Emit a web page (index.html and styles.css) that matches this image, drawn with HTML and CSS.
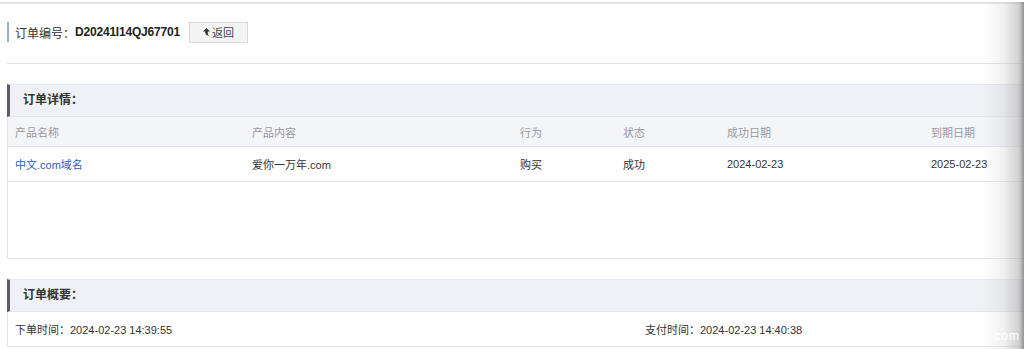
FILE: index.html
```html
<!DOCTYPE html>
<html lang="zh">
<head>
<meta charset="utf-8">
<link rel="stylesheet" href="styles.css">
</head>
<body>
<div class="page">
  <div class="order-head">
    <span class="label">订单编号：</span><span class="order-no">D20241I14QJ67701</span>
    <button class="back-btn"><svg class="back-ico" width="7" height="8" viewBox="0 0 7 8"><path d="M3.5 0 L7 3.4 H4.8 V5.2 C4.8 6.6 5.6 7.4 6.6 8 C4 7.8 2.2 6.6 2.2 4.6 V3.4 H0 Z" fill="#333"/></svg>返回</button>
  </div>
  <div class="divider"></div>

  <div class="section detail">
    <div class="sec-title">订单详情：</div>
    <div class="grid thead">
      <span>产品名称</span><span>产品内容</span><span>行为</span><span>状态</span><span>成功日期</span><span>到期日期</span>
    </div>
    <div class="grid trow">
      <a class="link">中文.com域名</a><span>爱你一万年.com</span><span>购买</span><span>成功</span><span>2024-02-23</span><span>2025-02-23</span>
    </div>
    <div class="empty"></div>
  </div>

  <div class="section summary">
    <div class="sec-title">订单概要：</div>
    <div class="sum-row">
      <span class="sum-left">下单时间：2024-02-23 14:39:55</span>
      <span class="sum-right">支付时间：2024-02-23 14:40:38</span>
    </div>
  </div>
</div>
<div class="edge-shadow"></div>
<div class="watermark">.com</div>
</body>
</html>
```

FILE: styles.css
```css
html, body {
  margin: 0;
  padding: 0;
  background: #fff;
  overflow: hidden;
  width: 1024px;
  height: 349px;
}
body {
  font-family: "Liberation Sans", "Noto Sans CJK SC", sans-serif;
  font-size: 11px;
  color: #333;
  border-top: 2px solid #fff;
  position: relative;
}
.page {
  border-top: 2px solid #e4e4e4;
  padding: 0 0 0 7px;
  width: 1040px;
}
.order-head {
  display: flex;
  align-items: center;
  height: 20px;
  margin-top: 18px;
  border-left: 2px solid #8fb0d8;
  padding-left: 6px;
  font-size: 12px;
}
.label { color: #333; }
.order-no {
  font-weight: bold;
  color: #222;
  letter-spacing: -0.2px;
}
.back-btn {
  margin-left: 9px;
  width: 59px;
  height: 21px;
  border: 1px solid #d8d8d8;
  background: #f4f4f4;
  font-family: inherit;
  font-size: 11px;
  color: #444;
  padding: 0;
  display: flex;
  align-items: center;
  justify-content: center;
}
.back-ico { margin-right: 2px; }
.divider {
  margin-top: 21px;
  height: 1px;
  background: #e2e2e2;
}
.section {
  border-left: 1px solid #e3e5ea;
  border-bottom: 1px solid #e3e5ea;
}
.detail { margin-top: 20px; }
.summary { margin-top: 20px; }
.sec-title {
  height: 31px;
  line-height: 31px;
  background: #f0f1f6;
  border-top: 1px solid #e5e7ee;
  border-bottom: 1px solid #e3e5ec;
  border-left: 3px solid #5a5d69;
  margin-left: -1px;
  padding-left: 13px;
  font-weight: bold;
  font-size: 12px;
  color: #333;
}
.grid {
  display: grid;
  grid-template-columns: 237px 268px 103px 104px 204px 1fr;
  padding-left: 7px;
  align-items: center;
}
.thead {
  height: 29px;
  background: #f4f5f9;
  color: #999;
  border-bottom: 1px solid #e3e5ec;
}
.trow {
  height: 34px;
  background: #fff;
  color: #333;
  border-bottom: 1px solid #e3e5ec;
}
.link { color: #1f5fbf; }
.empty { height: 76px; }
.sum-row {
  height: 34px;
  display: flex;
  align-items: center;
  padding-left: 7px;
  color: #333;
}
.sum-left { width: 630px; }
.edge-shadow {
  position: absolute;
  top: -2px;
  right: 0;
  width: 42px;
  height: 351px;
  background: linear-gradient(to right, rgba(200,200,200,0) 0%, rgba(200,200,200,0.25) 50%, rgba(170,170,170,0.55) 88%, rgba(120,120,120,0.8) 100%);
}
.watermark {
  position: absolute;
  right: 4px;
  top: 327px;
  color: #fff;
  font-size: 12px;
  letter-spacing: 1px;
}
```
